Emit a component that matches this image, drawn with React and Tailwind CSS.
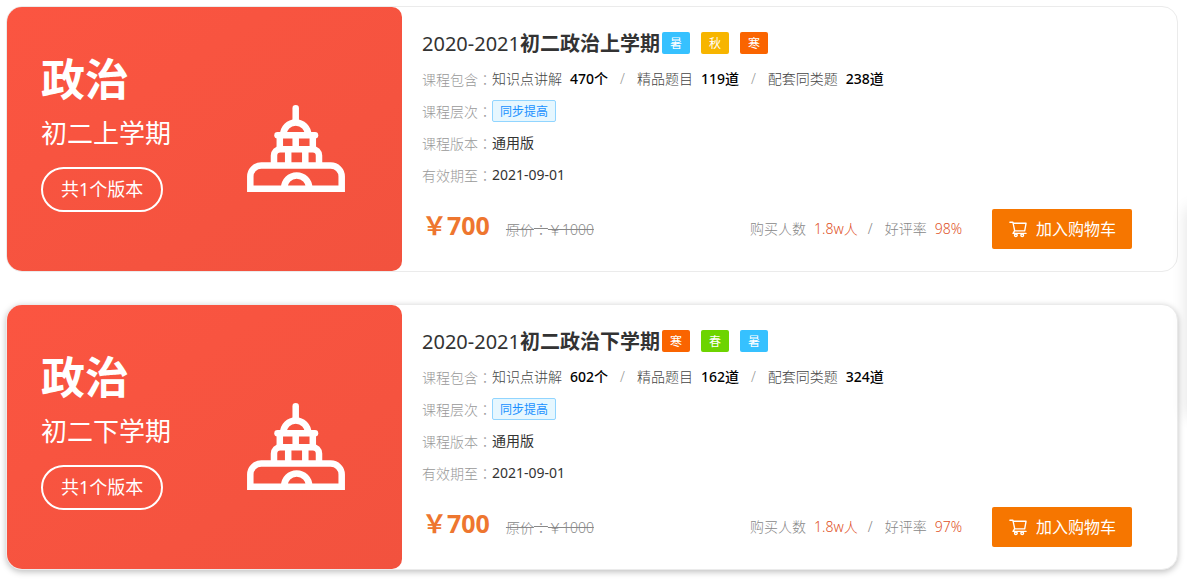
import React from 'react';
import clsx from 'clsx';
import { AiOutlineShoppingCart } from 'react-icons/ai';

const SEASON_COLORS = {
  春: 'bg-[#6dd400]',
  暑: 'bg-[#36c1ff]',
  秋: 'bg-[#f7b500]',
  寒: 'bg-[#fa6400]',
};

const courses = [
  {
    id: 1,
    subject: '政治',
    term: '初二上学期',
    years: '2020-2021',
    seasons: ['暑', '秋', '寒'],
    contents: [
      { label: '知识点讲解', count: '470', unit: '个' },
      { label: '精品题目', count: '119', unit: '道' },
      { label: '配套同类题', count: '238', unit: '道' },
    ],
    rating: '98%',
  },
  {
    id: 2,
    subject: '政治',
    term: '初二下学期',
    years: '2020-2021',
    seasons: ['寒', '春', '暑'],
    contents: [
      { label: '知识点讲解', count: '602', unit: '个' },
      { label: '精品题目', count: '162', unit: '道' },
      { label: '配套同类题', count: '324', unit: '道' },
    ],
    rating: '97%',
    raised: true,
  },
];

function CapitolIcon() {
  return (
    <svg viewBox="0 0 98 87" className="w-[98px] h-[87px] shrink-0" fill="none" stroke="white" strokeWidth="6.5" aria-hidden="true">
      {/* spire and dome */}
      <path d="M48.7 3.3V17" strokeLinecap="round" />
      <path d="M36.2 30a12.5 12.5 0 0 1 25 0" />
      <path d="M30.5 30.2H68" strokeLinecap="round" />
      {/* upper floor */}
      <path d="M32.8 30v13M48.7 30v13M65.8 30v13" />
      {/* middle floor */}
      <path d="M27 60V50.5a6.3 6.3 0 0 1 6.3-6.3h32.4a6.3 6.3 0 0 1 6.3 6.3V60M41.2 44v16M58.3 44v16" />
      {/* base with the arch */}
      <path d="M3.3 83.7V71.5a11 11 0 0 1 11-11h69.4a11 11 0 0 1 11 11v12.2z" />
      <path d="M37.2 83a12.5 12.5 0 0 1 25 0" />
    </svg>
  );
}

// full-width colon, centred in its box
function Colon() {
  return <span className="font-['Noto_Sans_CJK_TC',sans-serif]">：</span>;
}

function InfoRow({ label, children }) {
  return (
    <div className="flex items-center h-8 text-sm">
      <dt className="font-light leading-5 text-[#999]">{label}<Colon /></dt>
      <dd className="flex items-center text-[#333]">{children}</dd>
    </div>
  );
}

function CourseCard({ course }) {
  return (
    <article className={clsx('flex border border-[#ebebeb] rounded-2xl bg-white', course.raised && 'shadow-[0_2px_6px_rgba(0,0,0,0.25)]')}>
      <div className="flex items-center justify-between w-[395px] shrink-0 pl-[34px] pr-[57px] rounded-l-[15px] rounded-r-[10px] bg-linear-to-br from-[#fb5541] to-[#f2523e] text-white">
        <div className="pb-4">
          <h2 className="text-[44px] leading-[56px] font-bold">{course.subject}</h2>
          <p className="mt-1.5 text-[26px] leading-10">{course.term}</p>
          <span className="inline-flex items-center h-[45px] mt-3.5 px-[18px] border-2 border-white rounded-full text-lg">共1个版本</span>
        </div>
        <div className="pt-[18px]">
          <CapitolIcon />
        </div>
      </div>

      <div className="flex-1 pl-5 pr-[45px] pt-5 pb-[22px]">
        <div className="flex items-center h-8 mb-1">
          <h3 className="mt-0.5 mr-0.5 text-xl text-[#333]">
            <span className="font-normal">{course.years}</span>
            <span className="font-bold">{course.term.slice(0, 2)}{course.subject}{course.term.slice(2)}</span>
          </h3>
          <div className="flex gap-[11px]">
            {course.seasons.map((season) => (
              <span key={season} className={clsx('flex items-center justify-center w-7 h-[22px] pt-0.5 rounded-xs text-xs text-white', SEASON_COLORS[season])}>
                {season}
              </span>
            ))}
          </div>
        </div>

        <dl>
          <InfoRow label="课程包含">
            {course.contents.map((item, i) => (
              <React.Fragment key={item.label}>
                {i > 0 && <span className="mx-3 font-light text-[#999]">/</span>}
                <span className="font-light text-[#444]">{item.label}</span>
                <span className="ml-2 font-medium text-black">{item.count}{item.unit}</span>
              </React.Fragment>
            ))}
          </InfoRow>
          <InfoRow label="课程层次">
            <span className="flex items-center h-[22px] px-[7px] pt-0.5 border border-[#91d5ff] rounded-xs bg-[#e6f7ff] text-xs text-[#1890ff]">同步提高</span>
          </InfoRow>
          <InfoRow label="课程版本">通用版</InfoRow>
          <InfoRow label="有效期至">2021-09-01</InfoRow>
        </dl>

        <div className="flex items-center justify-between mt-[18px]">
          <div className="flex items-baseline pb-2">
            <span className="text-[25px] leading-8 font-bold text-[#ee762f]">￥700</span>
            <del className="ml-4 text-sm font-light text-[#888]">原价<Colon />￥1000</del>
          </div>
          <div className="flex items-center">
            <p className="flex items-center mr-[30px] text-sm font-light text-[#888]">
              <span>购买人数</span>
              <span className="ml-2 text-[#e0521f]">1.8w人</span>
              <span className="ml-2.5 mr-3">/</span>
              <span>好评率</span>
              <span className="ml-2 text-[#e0521f]">{course.rating}</span>
            </p>
            <button type="button" className="flex items-center justify-center gap-2 w-[140px] h-10 rounded-xs bg-[#f67600] text-base text-white cursor-pointer">
              <AiOutlineShoppingCart size={20} className="shrink-0" />
              <span>加入购物车</span>
            </button>
          </div>
        </div>
      </div>
    </article>
  );
}

export default function App() {
  return (
    <main className="flex flex-col gap-8 pt-1.5 pl-1.5 pr-[9px] pb-3 bg-white font-['Noto_Sans','Noto_Sans_CJK_SC',sans-serif]">
      {courses.map((course) => (
        <CourseCard key={course.id} course={course} />
      ))}
      {/* collapsed side bar, only its shadow shows */}
      <aside className="fixed left-full top-52 w-10 h-52 bg-white shadow-[0_0_16px_rgba(0,0,0,0.12)]" />
    </main>
  );
}
